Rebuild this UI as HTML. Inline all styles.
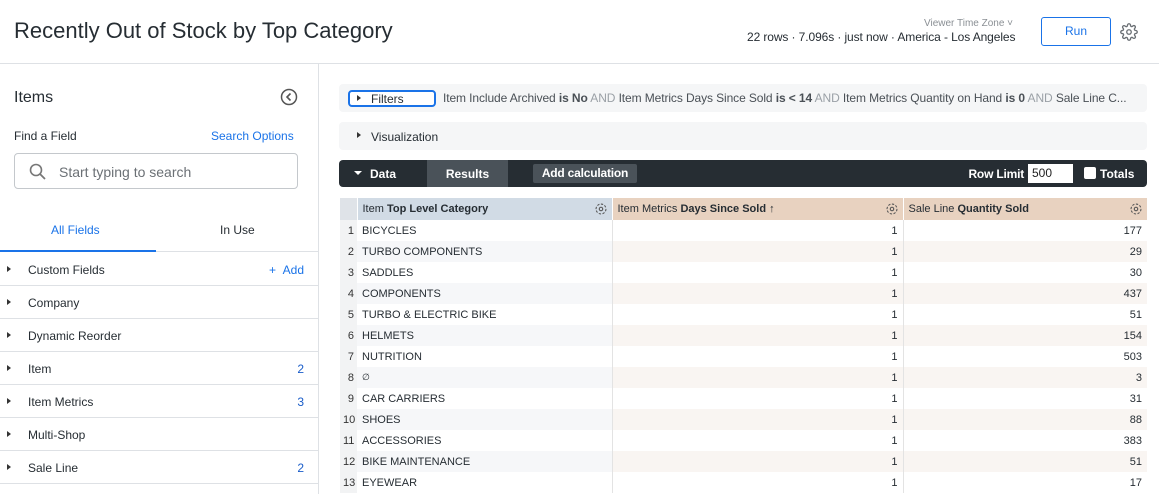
<!DOCTYPE html>
<html><head><meta charset="utf-8"><style>
*{box-sizing:border-box;margin:0;padding:0}
body{width:1159px;height:494px;overflow:hidden;background:#fff;font-family:"Liberation Sans",Arial,sans-serif;color:#262d33;position:relative}
.a{position:absolute}
.hdr{left:0;top:0;width:1159px;height:64px;border-bottom:1px solid #dee1e5}
.side{left:0;top:64px;width:319px;height:430px;border-right:1px solid #dee1e5}
.li{position:absolute;left:0;width:318px;height:33px;border-bottom:1px solid #dee1e5;font-size:12px;color:#262d33}
.li .t{position:absolute;left:28px;top:10px}
.li .ar{position:absolute;left:7px;top:13px;width:0;height:0;border-left:4px solid #333;border-top:3px solid transparent;border-bottom:3px solid transparent}
.li .n{position:absolute;right:14px;top:10px;color:#1a5dc9;font-size:12px}
.main{left:319px;top:64px;width:840px;height:430px;background:#fff}
.bar{position:absolute;left:20px;width:808px;background:#f5f6f7;border-radius:4px;font-size:12px}
table{border-collapse:collapse;font-size:11px;position:absolute;left:340px;top:198px;width:807px;table-layout:fixed}
td,th{height:21px;padding:0 5px;white-space:nowrap;overflow:hidden;vertical-align:middle}
th{font-weight:normal;text-align:left;font-size:11px;height:22px;position:relative}
td.r{text-align:right;border-left:1px solid #e3e3e3}
td.nm{text-align:right;padding:0 3px;color:#333;background:#f2f3f4}
tr.e td.d{background:#f6f7f9}
tr.e td.r{background:#f9f5f2}
.gear{position:absolute;right:4px;top:4px}
</style></head><body>
<div class="a hdr">
 <div class="a" style="left:14px;top:18px;font-size:22px;color:#262d33">Recently Out of Stock by Top Category</div>
 <div class="a" style="left:924px;top:18px;font-size:10px;color:#8a8f94">Viewer Time Zone ˅</div>
 <div class="a" style="left:747px;top:30px;font-size:12px;color:#262d33;letter-spacing:-0.1px">22 rows · 7.096s · just now · America - Los Angeles</div>
 <div class="a" style="left:1041px;top:17px;width:70px;height:29px;border:1px solid #1a73e8;border-radius:3px;color:#1a73e8;font-size:12px;text-align:center;line-height:27px">Run</div>
 <svg class="a" style="left:1120px;top:23px" width="18" height="18" viewBox="0 0 24 24" fill="none" stroke="#6b7075" stroke-width="1.8"><circle cx="12" cy="12" r="3"/><path d="M19.4 15a1.7 1.7 0 0 0 .3 1.8l.1.1a2 2 0 1 1-2.8 2.8l-.1-.1a1.7 1.7 0 0 0-1.8-.3 1.7 1.7 0 0 0-1 1.5V21a2 2 0 0 1-4 0v-.1a1.7 1.7 0 0 0-1.1-1.5 1.7 1.7 0 0 0-1.8.3l-.1.1a2 2 0 1 1-2.8-2.8l.1-.1a1.7 1.7 0 0 0 .3-1.8 1.7 1.7 0 0 0-1.5-1H3a2 2 0 0 1 0-4h.1a1.7 1.7 0 0 0 1.5-1.1 1.7 1.7 0 0 0-.3-1.8l-.1-.1a2 2 0 1 1 2.8-2.8l.1.1a1.7 1.7 0 0 0 1.8.3H9a1.7 1.7 0 0 0 1-1.5V3a2 2 0 0 1 4 0v.1a1.7 1.7 0 0 0 1 1.5 1.7 1.7 0 0 0 1.8-.3l.1-.1a2 2 0 1 1 2.8 2.8l-.1.1a1.7 1.7 0 0 0-.3 1.8V9a1.7 1.7 0 0 0 1.5 1H21a2 2 0 0 1 0 4h-.1a1.7 1.7 0 0 0-1.5 1z"/></svg>
</div>
<div class="a side">
 <div class="a" style="left:14px;top:25px;font-size:16px">Items</div>
 <svg class="a" style="left:280px;top:24px" width="18" height="18" viewBox="0 0 18 18"><circle cx="9" cy="9" r="7.5" fill="none" stroke="#555" stroke-width="1.5"/><path d="M10.5 5.5 7 9l3.5 3.5" fill="none" stroke="#555" stroke-width="1.6"/></svg>
 <div class="a" style="left:14px;top:65px;font-size:12px">Find a Field</div>
 <div class="a" style="left:211px;top:65px;font-size:12px;color:#1a73e8">Search Options</div>
 <div class="a" style="left:14px;top:89px;width:284px;height:36px;border:1px solid #c4c8cc;border-radius:4px">
  <svg class="a" style="left:14px;top:9px" width="18" height="18" viewBox="0 0 18 18"><circle cx="7" cy="7" r="5.5" fill="none" stroke="#777" stroke-width="1.6"/><path d="M11 11l5 5" stroke="#777" stroke-width="1.8"/></svg>
  <div class="a" style="left:44px;top:10px;font-size:14px;color:#6b7075">Start typing to search</div>
 </div>
 <div class="a" style="left:51px;top:159px;font-size:12px;color:#1a73e8">All Fields</div>
 <div class="a" style="left:220px;top:159px;font-size:12px">In Use</div>
 <div class="a" style="left:0;top:187px;width:318px;height:1px;background:#dee1e5"></div>
 <div class="a" style="left:0;top:186px;width:156px;height:2px;background:#1a73e8"></div>
 <div class="li" style="top:189px"><i class="ar"></i><span class="t">Custom Fields</span><span class="n" style="color:#1a73e8">+ &nbsp;Add</span></div>
 <div class="li" style="top:222px"><i class="ar"></i><span class="t">Company</span></div>
 <div class="li" style="top:255px"><i class="ar"></i><span class="t">Dynamic Reorder</span></div>
 <div class="li" style="top:288px"><i class="ar"></i><span class="t">Item</span><span class="n">2</span></div>
 <div class="li" style="top:321px"><i class="ar"></i><span class="t">Item Metrics</span><span class="n">3</span></div>
 <div class="li" style="top:354px"><i class="ar"></i><span class="t">Multi-Shop</span></div>
 <div class="li" style="top:387px"><i class="ar"></i><span class="t">Sale Line</span><span class="n">2</span></div>
</div>
<div class="a main">
 <div class="bar" style="top:20px;height:28px">
  <div class="a" style="left:9px;top:6px;width:88px;height:17px;border:2px solid #1a73e8;border-radius:4px;background:#fff"></div>
  <i class="a" style="left:18px;top:11px;border-left:4px solid #333;border-top:3.5px solid transparent;border-bottom:3.5px solid transparent"></i>
  <div class="a" style="left:32px;top:8px">Filters</div>
  <div class="a" style="left:104px;top:7px;color:#4a5056;white-space:nowrap;width:700px;overflow:hidden;letter-spacing:-0.1px">Item Include Archived <b>is No</b> <span style="color:#9aa0a6">AND</span> Item Metrics Days Since Sold <b>is &lt; 14</b> <span style="color:#9aa0a6">AND</span> Item Metrics Quantity on Hand <b>is 0</b> <span style="color:#9aa0a6">AND</span> Sale Line C...</div>
 </div>
 <div class="bar" style="top:58px;height:28px">
  <i class="a" style="left:18px;top:10px;border-left:4px solid #333;border-top:3.5px solid transparent;border-bottom:3.5px solid transparent"></i>
  <div class="a" style="left:32px;top:8px">Visualization</div>
 </div>
 <div class="a" style="left:20px;top:96px;width:808px;height:27px;background:#262d33;border-radius:4px;color:#fff;font-size:12px">
  <i class="a" style="left:15px;top:11px;border-top:4px solid #fff;border-left:4px solid transparent;border-right:4px solid transparent"></i>
  <div class="a" style="left:31px;top:7px;font-weight:bold">Data</div>
  <div class="a" style="left:88px;top:0;width:81px;height:27px;background:#4a5259;text-align:center;line-height:28px;font-weight:bold">Results</div>
  <div class="a" style="left:194px;top:4px;width:104px;height:19px;background:#4a5259;border-radius:2px;text-align:center;line-height:19px;font-weight:bold;letter-spacing:-0.2px">Add calculation</div>
  <div class="a" style="left:600px;width:85px;top:7px;font-weight:bold;text-align:right;letter-spacing:-0.2px">Row Limit</div>
  <div class="a" style="left:689px;top:4px;width:45px;height:19px;background:#fff;color:#222;padding-left:4px;line-height:19px">500</div>
  <div class="a" style="left:745px;top:7px;width:12px;height:12px;background:#fff;border-radius:2px"></div>
  <div class="a" style="left:761px;top:7px;font-weight:bold">Totals</div>
 </div>
</div>
<table>
<colgroup><col style="width:17px"><col style="width:255px"><col style="width:291px"><col style="width:244px"></colgroup>
<tr>
<th style="background:#dfe3e8"></th>
<th style="background:#d1dbe5;border-left:1px solid #fff">Item <b>Top Level Category</b><svg class="gear" width="14" height="14" viewBox="0 0 24 24" fill="none" stroke="#555" stroke-width="1.8"><circle cx="12" cy="12" r="3"/><circle cx="12" cy="12" r="8.5" stroke-dasharray="4 2.6"/></svg></th>
<th style="background:#e8d2c0;border-left:1px solid #fff">Item Metrics <b>Days Since Sold ↑</b><svg class="gear" width="14" height="14" viewBox="0 0 24 24" fill="none" stroke="#555" stroke-width="1.8"><circle cx="12" cy="12" r="3"/><circle cx="12" cy="12" r="8.5" stroke-dasharray="4 2.6"/></svg></th>
<th style="background:#e8d2c0;border-left:1px solid #fff">Sale Line <b>Quantity Sold</b><svg class="gear" width="14" height="14" viewBox="0 0 24 24" fill="none" stroke="#555" stroke-width="1.8"><circle cx="12" cy="12" r="3"/><circle cx="12" cy="12" r="8.5" stroke-dasharray="4 2.6"/></svg></th>
</tr>
<tr><td class="nm">1</td><td class="d">BICYCLES</td><td class="r">1</td><td class="r">177</td></tr>
<tr class="e"><td class="nm">2</td><td class="d">TURBO COMPONENTS</td><td class="r">1</td><td class="r">29</td></tr>
<tr><td class="nm">3</td><td class="d">SADDLES</td><td class="r">1</td><td class="r">30</td></tr>
<tr class="e"><td class="nm">4</td><td class="d">COMPONENTS</td><td class="r">1</td><td class="r">437</td></tr>
<tr><td class="nm">5</td><td class="d">TURBO &amp; ELECTRIC BIKE</td><td class="r">1</td><td class="r">51</td></tr>
<tr class="e"><td class="nm">6</td><td class="d">HELMETS</td><td class="r">1</td><td class="r">154</td></tr>
<tr><td class="nm">7</td><td class="d">NUTRITION</td><td class="r">1</td><td class="r">503</td></tr>
<tr class="e"><td class="nm">8</td><td class="d" style="font-size:9px">∅</td><td class="r">1</td><td class="r">3</td></tr>
<tr><td class="nm">9</td><td class="d">CAR CARRIERS</td><td class="r">1</td><td class="r">31</td></tr>
<tr class="e"><td class="nm">10</td><td class="d">SHOES</td><td class="r">1</td><td class="r">88</td></tr>
<tr><td class="nm">11</td><td class="d">ACCESSORIES</td><td class="r">1</td><td class="r">383</td></tr>
<tr class="e"><td class="nm">12</td><td class="d">BIKE MAINTENANCE</td><td class="r">1</td><td class="r">51</td></tr>
<tr><td class="nm">13</td><td class="d">EYEWEAR</td><td class="r">1</td><td class="r">17</td></tr>
</table>
</body></html>
